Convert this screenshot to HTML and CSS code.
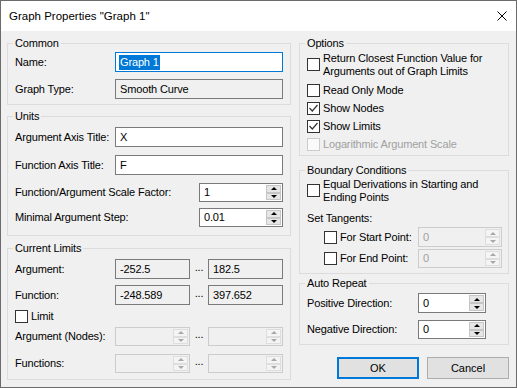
FILE: index.html
```html
<!DOCTYPE html>
<html lang="en">
<head>
  <meta charset="UTF-8">
  <title>Graph Properties</title>
  <link rel="stylesheet" href="styles.css">
</head>
<body>
  <div class="window">
    <div class="titlebar">
      <span class="title">Graph Properties "Graph 1"</span>
      <svg class="close" width="10" height="10" viewBox="0 0 10 10">
        <path d="M0.5 0.5L9.5 9.5M9.5 0.5L0.5 9.5" stroke="#000" stroke-width="1" fill="none"/>
      </svg>
    </div>

    <div class="client">
      <div class="col col-left">
        <fieldset class="group group-common">
          <legend>Common</legend>
          <div class="row">
            <span class="lbl">Name:</span>
            <div class="edit edit-focus"><span class="sel">Graph 1</span></div>
          </div>
          <div class="row gap-7">
            <span class="lbl">Graph Type:</span>
            <div class="edit edit-ro">Smooth Curve</div>
          </div>
        </fieldset>

        <fieldset class="group group-units">
          <legend>Units</legend>
          <div class="row">
            <span class="lbl">Argument Axis Title:</span>
            <div class="edit">X</div>
          </div>
          <div class="row gap-8">
            <span class="lbl">Function Axis Title:</span>
            <div class="edit">F</div>
          </div>
          <div class="row row-19 gap-8">
            <span class="lbl">Function/Argument Scale Factor:</span>
            <div class="spin">
              <span class="spin-val">1</span>
              <span class="spin-btns"><span class="spin-btn spin-up"></span><span class="spin-btn spin-down"></span></span>
            </div>
          </div>
          <div class="row row-19 gap-6">
            <span class="lbl">Minimal Argument Step:</span>
            <div class="spin">
              <span class="spin-val">0.01</span>
              <span class="spin-btns"><span class="spin-btn spin-up"></span><span class="spin-btn spin-down"></span></span>
            </div>
          </div>
        </fieldset>

        <fieldset class="group group-limits">
          <legend>Current Limits</legend>
          <div class="row">
            <span class="lbl">Argument:</span>
            <div class="edit edit-ro edit-half">-252.5</div>
            <span class="dots">...</span>
            <div class="edit edit-ro edit-half">182.5</div>
          </div>
          <div class="row gap-6">
            <span class="lbl">Function:</span>
            <div class="edit edit-ro edit-half">-248.589</div>
            <span class="dots">...</span>
            <div class="edit edit-ro edit-half">397.652</div>
          </div>
          <div class="check-row gap-5">
            <span class="check"></span>
            <span>Limit</span>
          </div>
          <div class="row row-19 gap-4">
            <span class="lbl">Argument (Nodes):</span>
            <div class="spin spin-off spin-half">
              <span class="spin-val"></span>
              <span class="spin-btns"><span class="spin-btn spin-up"></span><span class="spin-btn spin-down"></span></span>
            </div>
            <span class="dots">...</span>
            <div class="spin spin-off spin-half">
              <span class="spin-val"></span>
              <span class="spin-btns"><span class="spin-btn spin-up"></span><span class="spin-btn spin-down"></span></span>
            </div>
          </div>
          <div class="row row-19 gap-8">
            <span class="lbl">Functions:</span>
            <div class="spin spin-off spin-half">
              <span class="spin-val"></span>
              <span class="spin-btns"><span class="spin-btn spin-up"></span><span class="spin-btn spin-down"></span></span>
            </div>
            <span class="dots">...</span>
            <div class="spin spin-off spin-half">
              <span class="spin-val"></span>
              <span class="spin-btns"><span class="spin-btn spin-up"></span><span class="spin-btn spin-down"></span></span>
            </div>
          </div>
        </fieldset>
      </div>

      <div class="col col-right">
        <fieldset class="group group-options">
          <legend>Options</legend>
          <div class="check-row multi">
            <span class="check"></span>
            <span>Return Closest Function Value for<br>Arguments out of Graph Limits</span>
          </div>
          <div class="check-row gap-6">
            <span class="check"></span>
            <span>Read Only Mode</span>
          </div>
          <div class="check-row gap-5">
            <span class="check"><svg viewBox="0 0 11 11"><polyline points="1.5,5 4.3,8 9.5,2" fill="none" stroke="#333" stroke-width="1.2"/></svg></span>
            <span>Show Nodes</span>
          </div>
          <div class="check-row gap-5">
            <span class="check"><svg viewBox="0 0 11 11"><polyline points="1.5,5 4.3,8 9.5,2" fill="none" stroke="#333" stroke-width="1.2"/></svg></span>
            <span>Show Limits</span>
          </div>
          <div class="check-row gap-5 disabled">
            <span class="check check-off"></span>
            <span>Logarithmic Argument Scale</span>
          </div>
        </fieldset>

        <fieldset class="group group-boundary">
          <legend>Boundary Conditions</legend>
          <div class="check-row multi">
            <span class="check"></span>
            <span>Equal Derivations in Starting and<br>Ending Points</span>
          </div>
          <div class="plain gap-8">Set Tangents:</div>
          <div class="row tangent gap-2">
            <span class="check"></span>
            <span>For Start Point:</span>
            <div class="spin spin-off">
              <span class="spin-val">0</span>
              <span class="spin-btns"><span class="spin-btn spin-up"></span><span class="spin-btn spin-down"></span></span>
            </div>
          </div>
          <div class="row row-19 tangent gap-2">
            <span class="check"></span>
            <span>For End Point:</span>
            <div class="spin spin-off">
              <span class="spin-val">0</span>
              <span class="spin-btns"><span class="spin-btn spin-up"></span><span class="spin-btn spin-down"></span></span>
            </div>
          </div>
        </fieldset>

        <fieldset class="group group-repeat">
          <legend>Auto Repeat</legend>
          <div class="row">
            <span class="lbl lbl-wide">Positive Direction:</span>
            <div class="spin spin-short">
              <span class="spin-val">0</span>
              <span class="spin-btns"><span class="spin-btn spin-up"></span><span class="spin-btn spin-down"></span></span>
            </div>
          </div>
          <div class="row row-19 gap-7">
            <span class="lbl lbl-wide">Negative Direction:</span>
            <div class="spin spin-short">
              <span class="spin-val">0</span>
              <span class="spin-btns"><span class="spin-btn spin-up"></span><span class="spin-btn spin-down"></span></span>
            </div>
          </div>
        </fieldset>

        <div class="buttons">
          <button class="btn btn-default">OK</button>
          <button class="btn">Cancel</button>
        </div>
      </div>
    </div>
  </div>
</body>
</html>
```

FILE: styles.css
```css
* {
  box-sizing: border-box;
  margin: 0;
  padding: 0;
}

html,
body {
  width: 517px;
  height: 388px;
  overflow: hidden;
}

body {
  font-family: "Liberation Sans", Arial, sans-serif;
  font-size: 11px;
  letter-spacing: -0.15px;
  color: #000;
  background: #f0f0f0;
}

.window {
  width: 517px;
  height: 388px;
  border: 1px solid #6b6b6b;
  background: #f0f0f0;
  display: flex;
  flex-direction: column;
}

/* title bar */
.titlebar {
  height: 30px;
  flex: none;
  background: #fff;
  display: flex;
  align-items: center;
  justify-content: space-between;
  padding: 0 9px 0 8px;
}

.title {
  font-size: 11.5px;
  letter-spacing: 0;
}

.close {
  display: block;
}

/* dialog area */
.client {
  flex: 1;
  display: flex;
  gap: 8px;
  padding: 5px 0 0 6px;
}

.col-left {
  width: 284px;
}

.col-right {
  width: 210px;
  display: flex;
  flex-direction: column;
}

.group {
  border: 1px solid #dcdcdc;
  padding: 0 7px;
  min-width: 0;
}

.group legend {
  padding: 0 2px;
  margin-left: -2px;
  line-height: 15px;
}

.col-right .group {
  padding-right: 6px;
}

.group-common {
  padding-top: 1px;
  padding-bottom: 5px;
}

.group-units {
  margin-top: 4px;
  padding-top: 3px;
  padding-bottom: 8px;
}

.group-limits {
  margin-top: 5px;
  padding-top: 3px;
  padding-bottom: 6px;
}

.group-options {
  padding-top: 1px;
  padding-bottom: 4px;
}

.group-boundary {
  margin-top: 7px;
  padding-bottom: 5px;
}

.group-repeat {
  margin-top: 2px;
  padding-top: 2px;
  padding-bottom: 5px;
}

/* rows */
.row {
  display: flex;
  align-items: center;
  height: 20px;
  line-height: 13px;
}

.row-19 {
  height: 19px;
}

.gap-2 { margin-top: 2px; }
.gap-4 { margin-top: 4px; }
.gap-5 { margin-top: 5px; }
.gap-6 { margin-top: 6px; }
.gap-7 { margin-top: 7px; }
.gap-8 { margin-top: 8px; }

.lbl {
  min-width: 100px;
  white-space: nowrap;
}

.lbl-wide {
  min-width: 111px;
}

.plain {
  line-height: 13px;
}

.dots {
  width: 18px;
  text-align: center;
  position: relative;
  top: -2px;
}

/* edit boxes */
.edit {
  flex: 1;
  height: 100%;
  border: 1px solid #7a7a7a;
  background: #fff;
  padding-left: 4px;
  display: flex;
  align-items: center;
  white-space: nowrap;
  overflow: hidden;
}

.edit-focus {
  border-color: #0078d7;
  padding-left: 3px;
}

.sel {
  background: #0078d7;
  color: #fff;
  line-height: 15px;
  padding: 0 1px;
}

.edit-ro {
  background: #f0f0f0;
}

.edit-half {
  flex: none;
  width: 75px;
}

/* spin boxes */
.spin {
  display: flex;
  width: 84px;
  height: 100%;
  margin-left: auto;
  border: 1px solid #7a7a7a;
  background: #fff;
}

.spin-half {
  width: 75px;
  margin-left: 0;
}

.spin-short {
  width: 68px;
  margin-left: 0;
}

.spin-val {
  flex: 1;
  padding-left: 4px;
  display: flex;
  align-items: center;
}

.spin-btns {
  width: 16px;
  display: flex;
  flex-direction: column;
  padding: 1px 1px 1px 0;
}

.spin-btn {
  flex: 1;
  background: #e6e6e6;
  border: 1px solid #c6c6c6;
  display: flex;
  align-items: center;
  justify-content: center;
}

.spin-btn::before {
  content: '';
  border-left: 3px solid transparent;
  border-right: 3px solid transparent;
}

.spin-up::before {
  border-bottom: 3px solid #000;
}

.spin-down::before {
  border-top: 3px solid #000;
}

.spin-off {
  border-color: #cccccc;
  background: #f0f0f0;
  color: #a0a0a0;
}

.spin-off .spin-btn {
  background: #f4f4f4;
  border-color: #dedede;
}

.spin-off .spin-up::before {
  border-bottom-color: #a8a8a8;
}

.spin-off .spin-down::before {
  border-top-color: #a8a8a8;
}

/* check boxes */
.check-row {
  display: flex;
  align-items: center;
  height: 13px;
  line-height: 13px;
}

.check-row.multi {
  height: 26px;
  align-items: flex-start;
}

.multi .check {
  margin-top: 6px;
}

.check {
  width: 13px;
  height: 13px;
  flex: none;
  margin-right: 3px;
  border: 1px solid #333;
  background: #fff;
  display: flex;
}

.check svg {
  width: 11px;
  height: 11px;
}

.check-off {
  border-color: #cccccc;
  background: #fafafa;
}

.disabled {
  color: #a0a0a0;
}

.tangent {
  padding-left: 17px;
}

/* buttons */
.buttons {
  display: flex;
  justify-content: flex-end;
  gap: 8px;
  margin-top: 12px;
}

.btn {
  width: 82px;
  height: 22px;
  font: inherit;
  color: #000;
  background: #e1e1e1;
  border: 1px solid #adadad;
}

.btn-default {
  border: 2px solid #0078d7;
}
```
